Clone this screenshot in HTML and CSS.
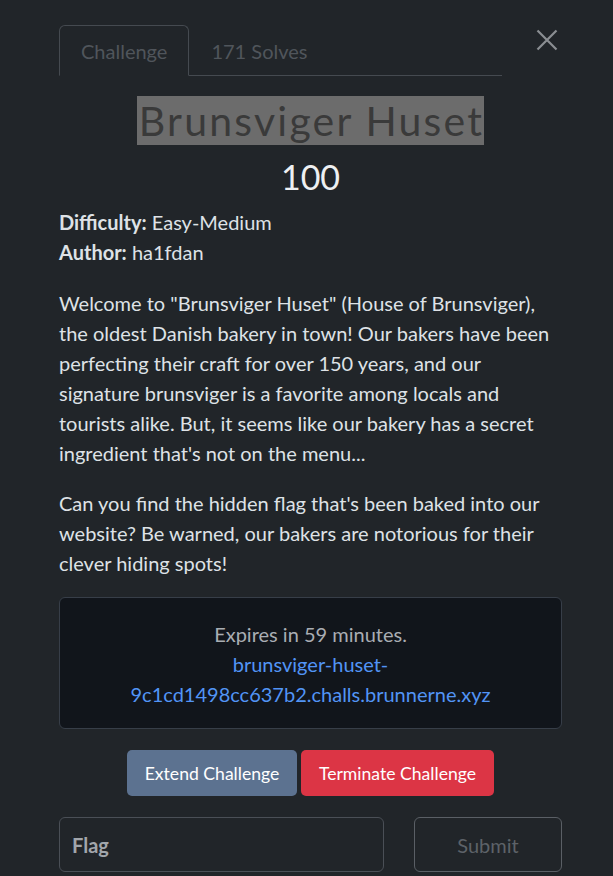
FILE: index.html
```html
<!DOCTYPE html>
<html lang="en">
<head>
<meta charset="utf-8">
<title>Brunsviger Huset</title>
<link rel="stylesheet" href="styles.css">
</head>
<body>
<div class="modal">
  <div class="head">
    <ul class="tabs">
      <li class="tab active">Challenge</li>
      <li class="tab">171 Solves</li>
    </ul>
    <button class="close" aria-label="Close">
      <svg width="22" height="22" viewBox="0 0 22 22"><path d="M1.5 1.5 L20.5 20.5 M20.5 1.5 L1.5 20.5" stroke="#8b8e92" stroke-width="2.2" fill="none"/></svg>
    </button>
  </div>
  <h2 class="title"><span class="hl">Brunsviger Huset</span></h2>
  <div class="points">100</div>
  <div class="meta">
    <div><b>Difficulty:</b> Easy-Medium</div>
    <div><b>Author:</b> ha1fdan</div>
  </div>
  <p class="desc">Welcome to "Brunsviger Huset" (House of Brunsviger), the oldest Danish bakery in town! Our bakers have been perfecting their craft for over 150 years, and our signature brunsviger is a favorite among locals and tourists alike. But, it seems like our bakery has a secret ingredient that's not on the menu...</p>
  <p class="desc">Can you find the hidden flag that's been baked into our website? Be warned, our bakers are notorious for their clever hiding spots!</p>
  <div class="instance">
    <div class="expires">Expires in 59 minutes.</div>
    <a class="link" href="#">brunsviger-huset-<br>9c1cd1498cc637b2.challs.brunnerne.xyz</a>
  </div>
  <div class="actions">
    <button class="btn extend">Extend Challenge</button>
    <button class="btn terminate">Terminate Challenge</button>
  </div>
  <form class="flag-row">
    <input class="flag" type="text" placeholder="Flag">
    <button class="submit" type="button">Submit</button>
  </form>
</div>
</body>
</html>
```
FILE: styles.css
```css
* { box-sizing: border-box; }
html, body { height: 100%; }
body {
  margin: 0;
  background: #212529;
  color: #dee2e6;
  font-family: Lato, "Noto Sans", sans-serif;
  font-size: 20px;
  line-height: 30px;
  overflow: hidden;
}
.modal {
  padding: 25px 51px 0 59px;
}
.head {
  display: flex;
  align-items: flex-start;
}
.tabs {
  flex: 1;
  display: flex;
  list-style: none;
  margin: 0 30px 0 0;
  padding: 0;
  border-bottom: 1px solid #454a50;
}
.tab {
  height: 51px;
  padding: 0 21px;
  margin-bottom: -1px;
  display: flex;
  align-items: center;
  color: #50555b;
  font-size: 20px;
  border: 1px solid transparent;
  border-radius: 6px 6px 0 0;
}
.tab.active {
  border-color: #454a50;
  border-bottom-color: #212529;
  background: #212529;
}
.close {
  width: 30px;
  height: 30px;
  margin-top: 0;
  padding: 0;
  border: 0;
  background: transparent;
  display: flex;
  align-items: center;
  justify-content: center;
}
.title {
  margin: 21px 0 0;
  text-align: center;
  font-weight: 400;
  font-size: 41px;
  line-height: 47px;
  letter-spacing: 2.2px;
}
.hl {
  background: #6c6c6c;
  color: #3a3a3a;
  padding: 0 0 0 2px;
}
.points {
  margin-top: 13px;
  text-align: center;
  font-size: 34px;
  line-height: 40px;
  color: #eef0f2;
}
.meta {
  margin-top: 10px;
}
.meta b { font-weight: 700; }
.desc {
  margin: 21px 0 0;
}
.desc + .desc { margin-top: 20px; }
.instance {
  margin-top: 19px;
  background: #11151b;
  border: 1px solid #373e48;
  border-radius: 6px;
  padding: 21px 10px 19px;
  text-align: center;
}
.expires { color: #a9adb3; }
.link {
  color: #5294f5;
  text-decoration: none;
}
.actions {
  margin-top: 21px;
  display: flex;
  justify-content: center;
  gap: 4px;
}
.btn {
  height: 46px;
  border: 0;
  border-radius: 5px;
  color: #ffffff;
  font-family: Lato, "Noto Sans", sans-serif;
  font-size: 17.6px;
  padding: 0;
}
.extend { background: #5c7290; width: 170px; }
.terminate { background: #dc3545; width: 193px; }
.flag-row {
  margin-top: 21px;
  display: flex;
  gap: 30px;
}
.flag {
  width: 325px;
  height: 55px;
  background: #212529;
  border: 1px solid #4a4f56;
  border-radius: 6px;
  padding: 0 12px;
  font-family: Lato, "Noto Sans", sans-serif;
  font-size: 20px;
  font-weight: 700;
  color: #dee2e6;
}
.flag::placeholder { color: #a2a6ab; opacity: 1; }
.submit {
  flex: 1;
  height: 55px;
  background: transparent;
  border: 1px solid #5a5f65;
  border-radius: 6px;
  color: #5d6268;
  font-family: Lato, "Noto Sans", sans-serif;
  font-size: 20px;
}
```
